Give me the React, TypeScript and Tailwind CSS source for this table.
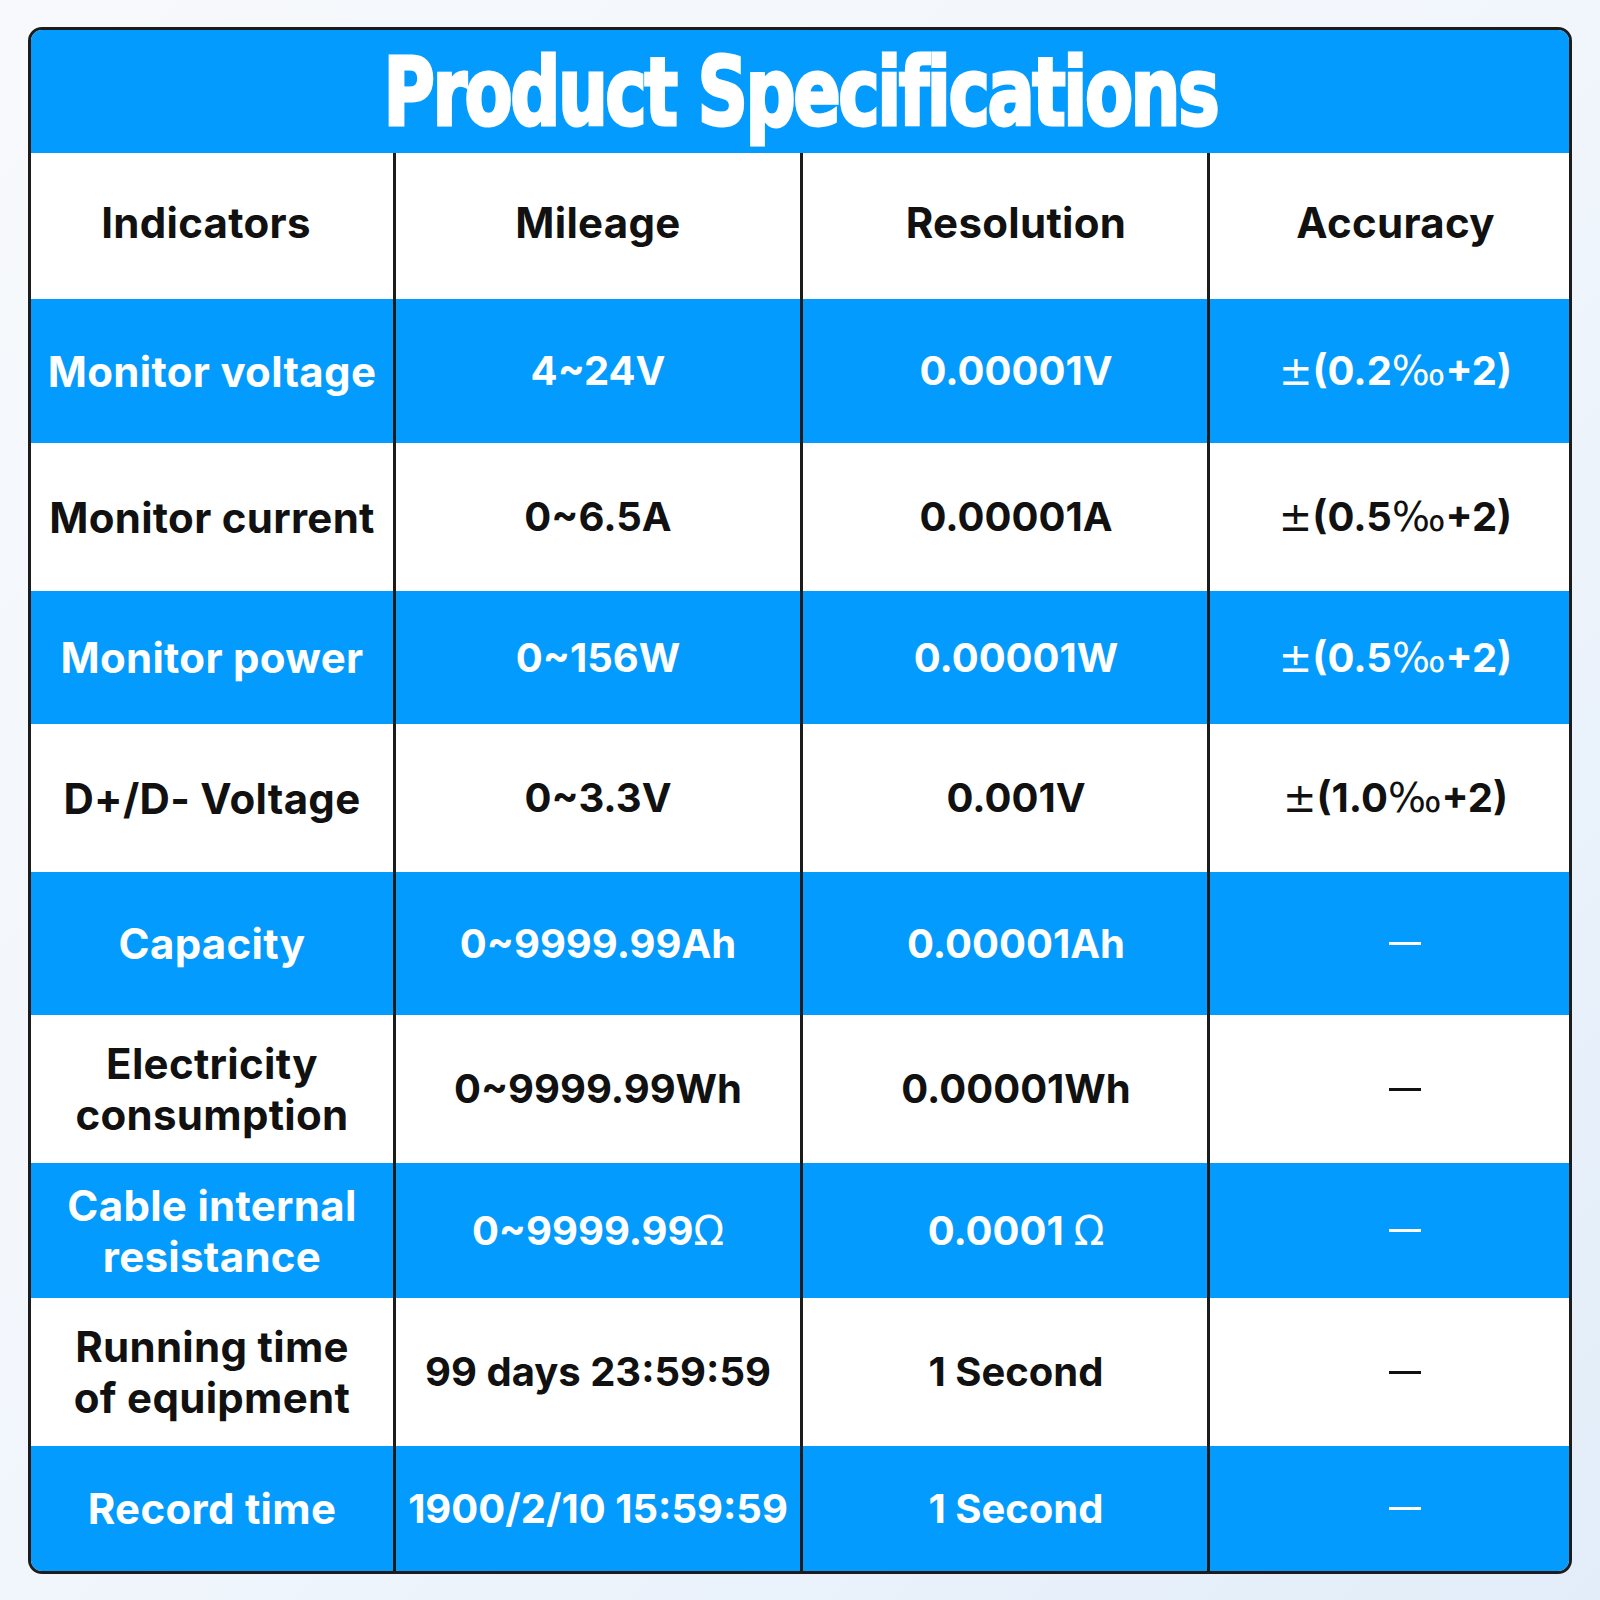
import React from 'react';

type Row = {
  label: string[];
  mileage: React.ReactNode;
  resolution: React.ReactNode;
  accuracy: React.ReactNode;
  h: string;
  blue: boolean;
};

// thin glyphs (±, ‰, Ω) in the reference come from a lighter face
const Thin = ({ c, className = '' }: { c: string; className?: string }) => (
  <span className={`font-normal ${className}`} style={{ fontFamily: '"DejaVu Sans", sans-serif' }}>
    {c}
  </span>
);

const acc = (v: string) => (
  <>
    <Thin c="±" />({v}
    <Thin c="‰" />
    +2)
  </>
);

const rows: Row[] = [
  { label: ['Monitor voltage'], mileage: '4~24V', resolution: '0.00001V', accuracy: acc('0.2'), h: 'h-[144px]', blue: true },
  { label: ['Monitor current'], mileage: '0~6.5A', resolution: '0.00001A', accuracy: acc('0.5'), h: 'h-[148px]', blue: false },
  { label: ['Monitor power'], mileage: '0~156W', resolution: '0.00001W', accuracy: acc('0.5'), h: 'h-[133px]', blue: true },
  { label: ['D+/D- Voltage'], mileage: '0~3.3V', resolution: '0.001V', accuracy: acc('1.0'), h: 'h-[148px]', blue: false },
  { label: ['Capacity'], mileage: '0~9999.99Ah', resolution: '0.00001Ah', accuracy: null, h: 'h-[143px]', blue: true },
  { label: ['Electricity', 'consumption'], mileage: '0~9999.99Wh', resolution: '0.00001Wh', accuracy: null, h: 'h-[148px]', blue: false },
  {
    label: ['Cable internal', 'resistance'],
    mileage: (
      <>
        0~9999.99
        <Thin c="Ω" />
      </>
    ),
    resolution: (
      <>
        0.0001
        <Thin c="Ω" className="ml-[10px]" />
      </>
    ),
    accuracy: null,
    h: 'h-[135px]',
    blue: true,
  },
  { label: ['Running time', 'of equipment'], mileage: '99 days 23:59:59', resolution: '1 Second', accuracy: null, h: 'h-[148px]', blue: false },
  { label: ['Record time'], mileage: '1900/2/10 15:59:59', resolution: '1 Second', accuracy: null, h: 'h-[125px]', blue: true },
];

function Dash({ blue }: { blue: boolean }) {
  return <span className={`block w-[32px] h-[3px] ml-[30px] ${blue ? 'bg-white' : 'bg-[#111]'}`} />;
}

function SpecRow({ r }: { r: Row }) {
  const tone = r.blue ? 'bg-[#049bfe] text-white' : 'bg-white text-[#111]';
  const cell = 'flex items-center justify-center text-center border-l-[3px] border-[#1c1c1c] whitespace-nowrap';
  return (
    <div className={`flex ${r.h} ${tone}`}>
      <div className="w-[362px] flex flex-col items-center justify-center text-center leading-[51px] tracking-[0.3px]">
        {r.label.map((l) => (
          <span key={l}>{l}</span>
        ))}
      </div>
      <div className={`w-[407px] ${cell} text-[40px]`}>{r.mileage}</div>
      <div className={`w-[407px] ${cell} text-[40px] pl-[22px]`}>{r.resolution}</div>
      <div className={`flex-1 ${cell} text-[40px]`}>
        {r.accuracy ? <span className="pl-[12px]">{r.accuracy}</span> : <Dash blue={r.blue} />}
      </div>
    </div>
  );
}

export default function App() {
  return (
    <div className="w-[1600px] h-[1600px] bg-linear-to-br from-[#f7f9fc] via-[#f1f6fc] to-[#e2edf9] pt-[27px] pl-[28px]">
      <div
        className="w-[1544px] border-[3px] border-[#1c1c1c] rounded-[14px] overflow-hidden text-[42px] font-bold"
        style={{ fontFamily: 'Inter, "Open Sans", sans-serif' }}
      >
        <div className="h-[123px] bg-[#049bfe] flex items-start justify-center">
          <h1
            className="inline-block text-white text-[95px] font-bold leading-none tracking-[-3px] scale-x-[0.82] mt-[15px] whitespace-nowrap [-webkit-text-stroke:3px_white]"
            style={{ fontFamily: '"DejaVu Sans Condensed", "Liberation Sans Narrow", sans-serif' }}
          >
            Product Specifications
          </h1>
        </div>

        <div className="flex h-[146px] bg-white text-[#111] tracking-[0.3px]">
          <div className="w-[362px] flex items-center justify-center pb-[8px] pr-[12px]">Indicators</div>
          <div className="w-[407px] flex items-center justify-center border-l-[3px] border-[#1c1c1c] pb-[8px]">Mileage</div>
          <div className="w-[407px] flex items-center justify-center border-l-[3px] border-[#1c1c1c] pb-[8px] pl-[22px]">Resolution</div>
          <div className="flex-1 flex items-center justify-center border-l-[3px] border-[#1c1c1c] pb-[8px] pl-[12px]">Accuracy</div>
        </div>

        {rows.map((r) => (
          <SpecRow key={r.label.join(' ')} r={r} />
        ))}
      </div>
    </div>
  );
}
